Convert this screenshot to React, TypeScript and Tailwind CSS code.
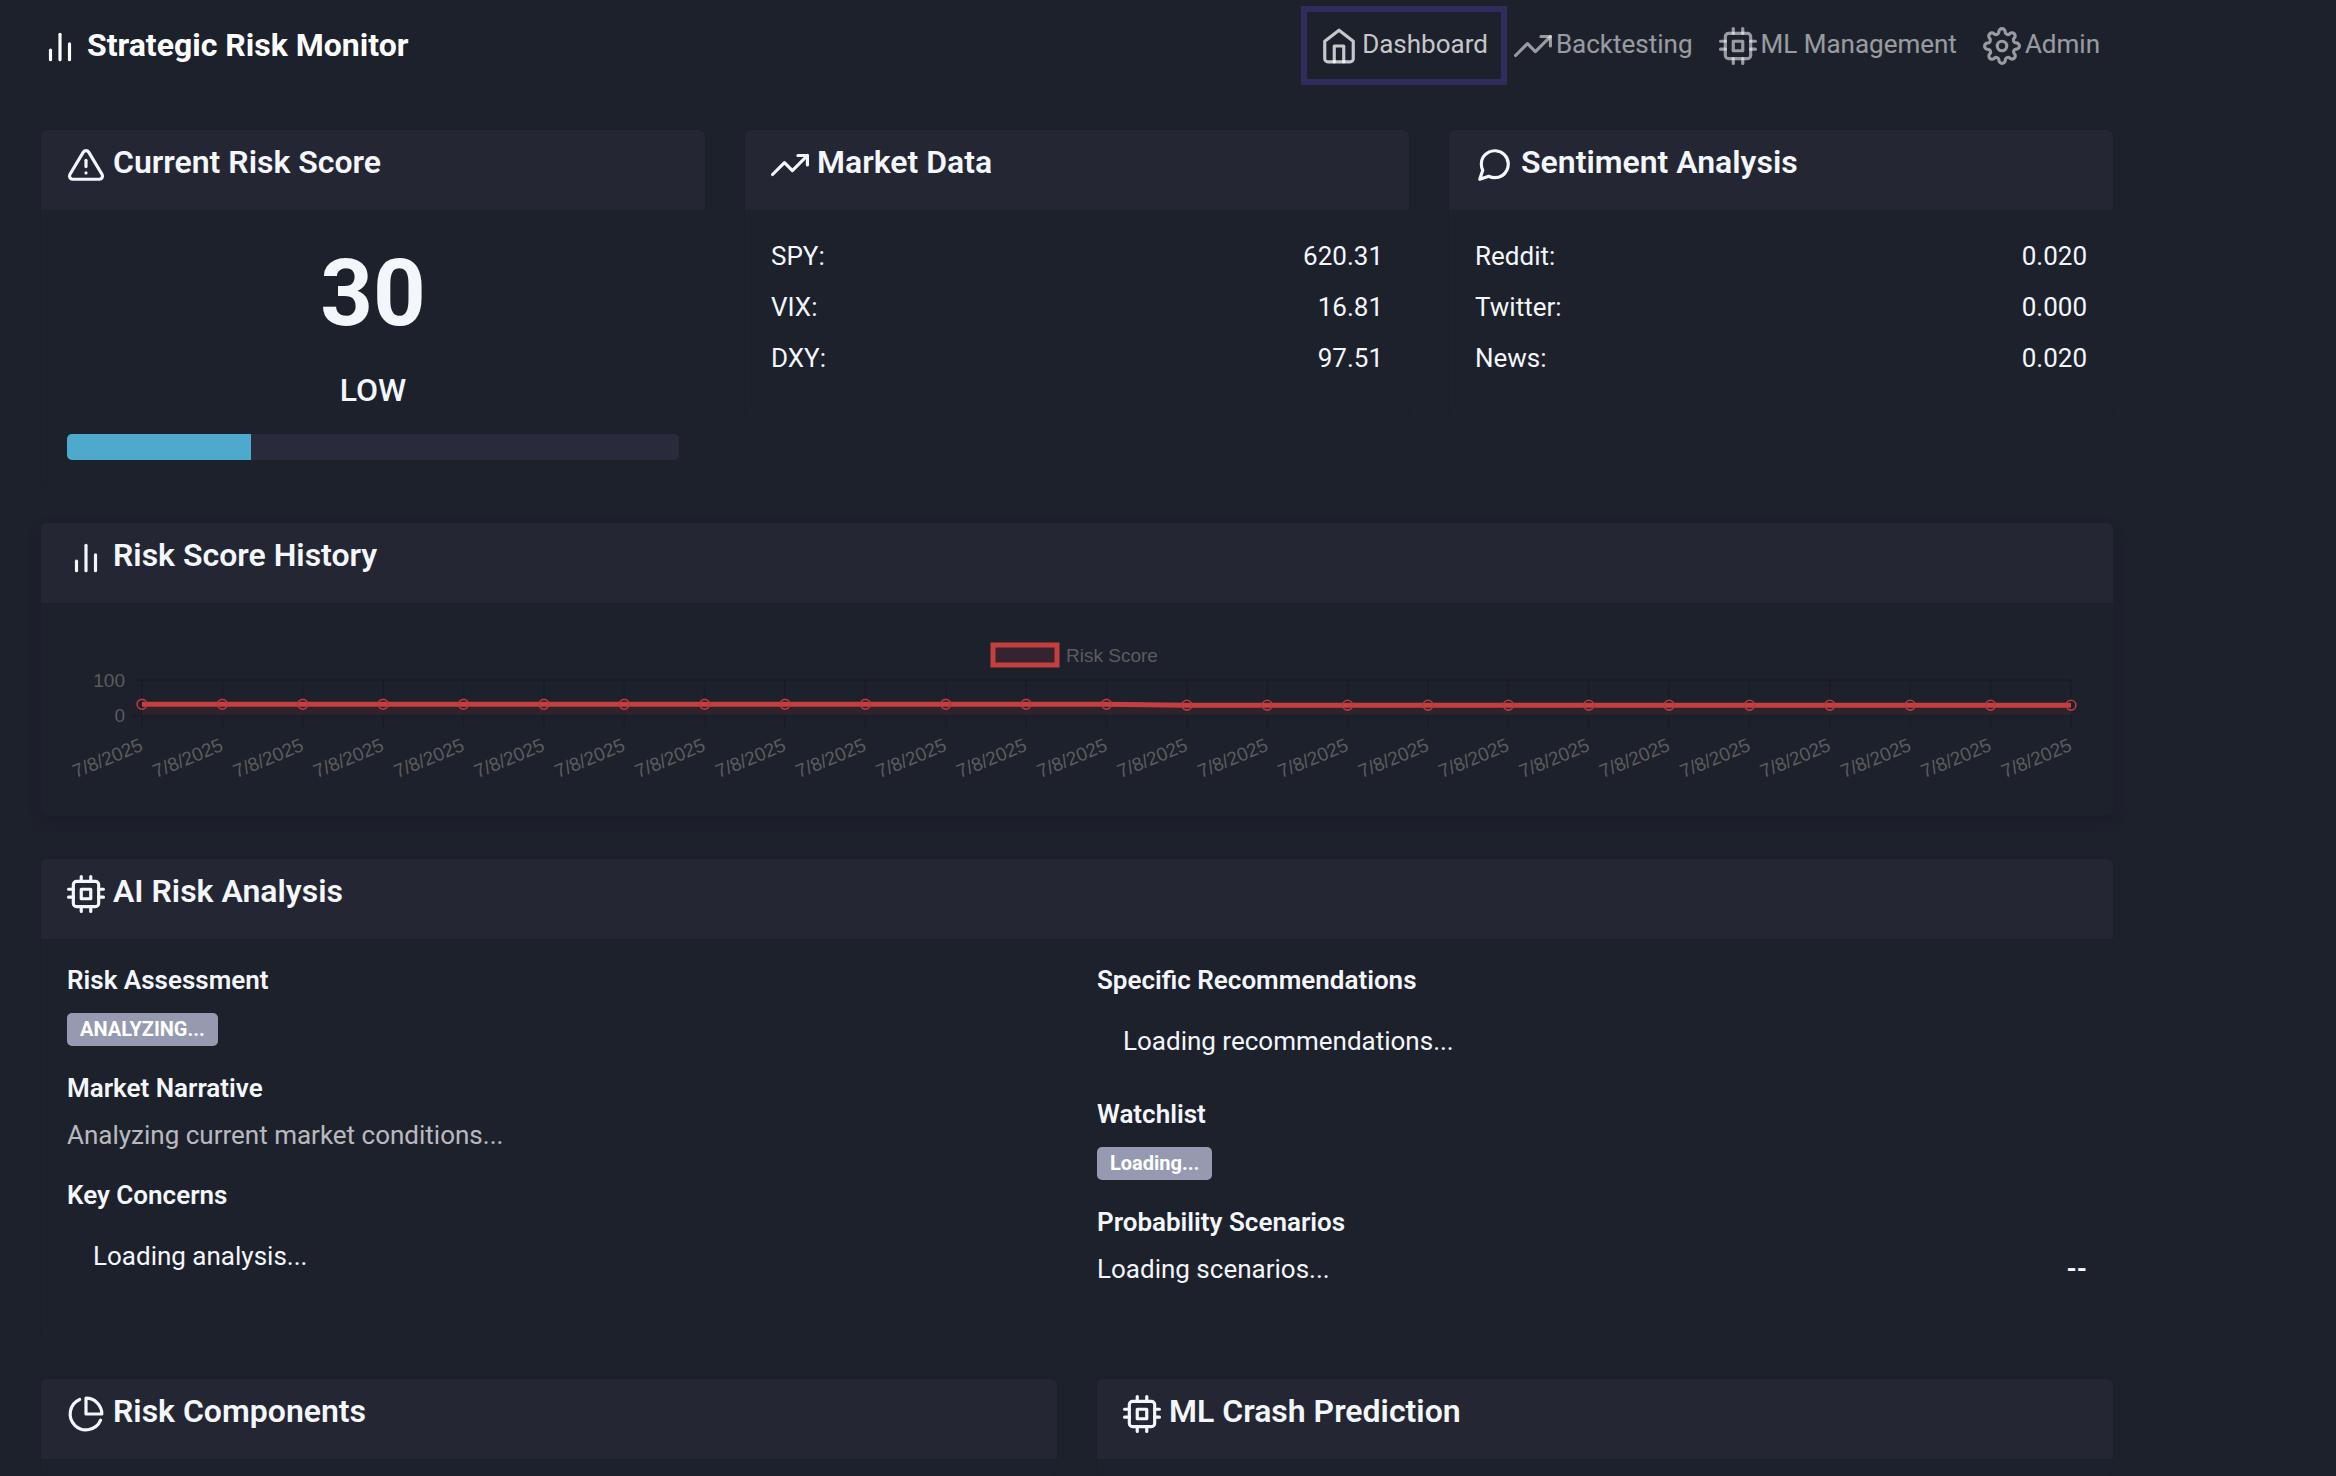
import type { ReactNode } from "react";
import type { IconType } from "react-icons";
import {
  FiAlertTriangle,
  FiBarChart2,
  FiCpu,
  FiHome,
  FiMessageCircle,
  FiPieChart,
  FiSettings,
  FiTrendingUp,
} from "react-icons/fi";

const navItems: { label: string; icon: IconType; active?: boolean }[] = [
  { label: "Dashboard", icon: FiHome, active: true },
  { label: "Backtesting", icon: FiTrendingUp },
  { label: "ML Management", icon: FiCpu },
  { label: "Admin", icon: FiSettings },
];

const marketData: [string, string][] = [
  ["SPY:", "620.31"],
  ["VIX:", "16.81"],
  ["DXY:", "97.51"],
];

const sentiment: [string, string][] = [
  ["Reddit:", "0.020"],
  ["Twitter:", "0.000"],
  ["News:", "0.020"],
];

const riskScore = 30;

function Card({ title, icon: Icon, children, className = "" }: { title: string; icon: IconType; children?: ReactNode; className?: string }) {
  return (
    <section className={`rounded-[5px] bg-[#1d212c] outline outline-[#1b1f29] ${className}`}>
      <header className="h-[81px] rounded-t-[5px] border-b border-[#1d212c] bg-[#242733] px-[26px] pt-[13px]">
        <h2 className="text-[32px] leading-[38px] font-semibold">
          <Icon className="mr-2 inline-block size-[38px] align-middle" />
          {title}
        </h2>
      </header>
      {children}
    </section>
  );
}

function Readings({ rows }: { rows: [string, string][] }) {
  return (
    <dl className="p-[26px]">
      {rows.map(([label, value]) => (
        <div key={label} className="mb-3 flex justify-between leading-[39px]">
          <dt>{label}</dt>
          <dd>{value}</dd>
        </div>
      ))}
    </dl>
  );
}

function SubHeading({ children }: { children: ReactNode }) {
  return <h3 className="leading-[29px] font-semibold">{children}</h3>;
}

function Badge({ children }: { children: ReactNode }) {
  return (
    <div className="mt-[18px] mb-7 flex">
      <span className="rounded-[5px] bg-[#969ab0] px-[13px] text-[20px] leading-[33px] font-bold text-white">{children}</span>
    </div>
  );
}

const left = 75;
const step = 80.375;
const points = Array.from({ length: 25 }, (_, i) => ({ x: left + i * step, y: i < 13 ? 74.3 : 75.2 }));
const right = points[24].x;
const linePath = points.map((p, i) => `${i ? "L" : "M"}${p.x} ${p.y}`).join(" ");

function HistoryChart() {
  return (
    <svg viewBox="0 0 2020 159" className="block w-full overflow-visible font-['Liberation_Sans',sans-serif] text-[19px]" role="img" aria-label="Risk score history">
      <rect x="926" y="15" width="64" height="20" fill="#35242f" stroke="#c53f3f" strokeWidth="5" />
      <text x="999" y="32" fill="#5c5c5d">Risk Score</text>
      <g stroke="#1a1c26" strokeWidth="1.6">
        <path d={`M65 50H${right}M65 85.5H${right}`} />
        {points.map((p) => (
          <path key={p.x} d={`M${p.x} 50V97.5`} />
        ))}
      </g>
      <text x="58" y="57" textAnchor="end" fill="#5c5c5d">100</text>
      <text x="58" y="92" textAnchor="end" fill="#5c5c5d">0</text>
      <path d={`${linePath}V85H${left}Z`} fill="#2e232c" />
      <path d={linePath} fill="none" stroke="#c53f3f" strokeWidth="5" />
      {points.map((p) => (
        <g key={p.x}>
          <circle cx={p.x} cy={p.y} r="4.9" fill="none" stroke="#bb3a40" strokeWidth="1.6" />
          <text textAnchor="end" fill="#5c5c5d" transform={`translate(${p.x + 2} 120) rotate(-22.5)`}>
            7/8/2025
          </text>
        </g>
      ))}
    </svg>
  );
}

export default function App() {
  return (
    <div className="min-h-screen bg-[#1d212c] pl-[41px] font-[Roboto,sans-serif] text-[26px] text-[#f3f6fa]">
      <div className="flex min-h-screen max-w-[2072px] flex-col">
        <header className="flex h-[90px] items-center justify-between">
          <h1 className="pt-0.5 text-[32px] leading-[38px] font-bold text-white">
            <FiBarChart2 className="mr-2 inline-block size-[38px] align-middle" />
            Strategic Risk Monitor
          </h1>
          <nav className="flex">
            {navItems.map(({ label, icon: Icon, active }) => (
              <a
                key={label}
                href="#"
                aria-current={active ? "page" : undefined}
                className={`h-[67px] px-[13px] pt-[13px] leading-[39px] ${active ? "text-white/75 ring-[6px] ring-[#302c5e]" : "text-white/55"}`}
              >
                <Icon className="mr-1 inline-block size-[38px] align-middle" />
                {label}
              </a>
            ))}
          </nav>
        </header>

        <main className="mt-10 flex grow flex-col">
          <div className="mb-[37px] grid grid-cols-3 items-start gap-10">
            <Card title="Current Risk Score" icon={FiAlertTriangle}>
              <div className="p-[26px] text-center">
                <p className="text-[92px] leading-[114px] font-bold">{riskScore}</p>
                <p className="mt-5 text-[32px] leading-[38px] font-medium">LOW</p>
                <div
                  role="progressbar"
                  aria-label="Risk score"
                  aria-valuenow={riskScore}
                  className="mt-[25px] h-[26px] overflow-hidden rounded-[5px] bg-[#292b3c]"
                >
                  <div className="h-full bg-[#4eaacd]" style={{ width: `${riskScore}%` }} />
                </div>
              </div>
            </Card>
            <Card title="Market Data" icon={FiTrendingUp}>
              <Readings rows={marketData} />
            </Card>
            <Card title="Sentiment Analysis" icon={FiMessageCircle}>
              <Readings rows={sentiment} />
            </Card>
          </div>

          <Card title="Risk Score History" icon={FiBarChart2} className="mb-11 shadow-[0_6px_12px_rgba(22,20,34,0.35)]">
            <div className="p-[26px]">
              <HistoryChart />
            </div>
          </Card>

          <Card title="AI Risk Analysis" icon={FiCpu} className="mb-10">
            <div className="grid grid-cols-2 gap-10 px-[26px] pt-[26px] pb-6">
              <div>
                <SubHeading>Risk Assessment</SubHeading>
                <Badge>ANALYZING...</Badge>
                <SubHeading>Market Narrative</SubHeading>
                <p className="mt-[13px] mb-[26px] leading-[39px] text-white/70">Analyzing current market conditions...</p>
                <SubHeading>Key Concerns</SubHeading>
                <p className="mt-[14px] px-[26px] py-[13px] leading-[39px]">Loading analysis...</p>
              </div>
              <div className="mb-[26px]">
                <SubHeading>Specific Recommendations</SubHeading>
                <p className="mt-[14px] mb-[26px] px-[26px] py-[13px] leading-[39px]">Loading recommendations...</p>
                <SubHeading>Watchlist</SubHeading>
                <Badge>Loading...</Badge>
                <SubHeading>Probability Scenarios</SubHeading>
                <div className="mt-[13px] flex justify-between leading-[39px]">
                  <span>Loading scenarios...</span>
                  <strong>--</strong>
                </div>
              </div>
            </div>
          </Card>

          <div className="grid grow grid-cols-2 gap-10">
            <Card title="Risk Components" icon={FiPieChart} />
            <Card title="ML Crash Prediction" icon={FiCpu} />
          </div>
        </main>
      </div>
    </div>
  );
}
